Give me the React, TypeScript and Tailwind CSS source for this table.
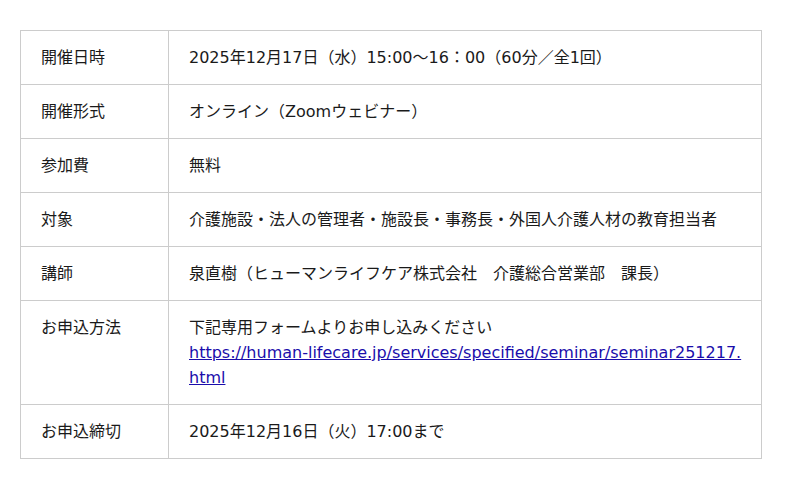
const rows: { label: string; value: React.ReactNode }[] = [
  { label: "開催日時", value: "2025年12月17日（水）15:00〜16：00（60分／全1回）" },
  { label: "開催形式", value: "オンライン（Zoomウェビナー）" },
  { label: "参加費", value: "無料" },
  { label: "対象", value: "介護施設・法人の管理者・施設長・事務長・外国人介護人材の教育担当者" },
  { label: "講師", value: "泉直樹（ヒューマンライフケア株式会社　介護総合営業部　課長）" },
  {
    label: "お申込方法",
    value: (
      <>
        下記専用フォームよりお申し込みください
        <br />
        {/* the url wraps right after "seminar251217." in the original */}
        <a href="#" className="text-[#1a0dab] underline">
          <span className="whitespace-nowrap">
            https://human-lifecare.jp/services/specified/seminar/seminar251217.
          </span>
          <br />
          html
        </a>
      </>
    ),
  },
  { label: "お申込締切", value: "2025年12月16日（火）17:00まで" },
];

export default function App() {
  return (
    <div
      className="min-h-[489px] bg-white pt-[30px] pl-[20px]"
      style={{ fontFamily: '"DejaVu Sans", "Noto Sans CJK JP", sans-serif' }}
    >
      <table className="w-[742px] table-fixed border-collapse text-[16px] leading-[25px] text-[#1a1a1a]">
        <tbody>
          {rows.map((row) => (
            <tr key={row.label}>
              <th className="w-[148px] border border-[#cccccc] px-[20px] py-[14px] text-left align-top font-normal">
                {row.label}
              </th>
              <td className="border border-[#cccccc] px-[20px] py-[14px] align-top">
                {row.value}
              </td>
            </tr>
          ))}
        </tbody>
      </table>
    </div>
  );
}
